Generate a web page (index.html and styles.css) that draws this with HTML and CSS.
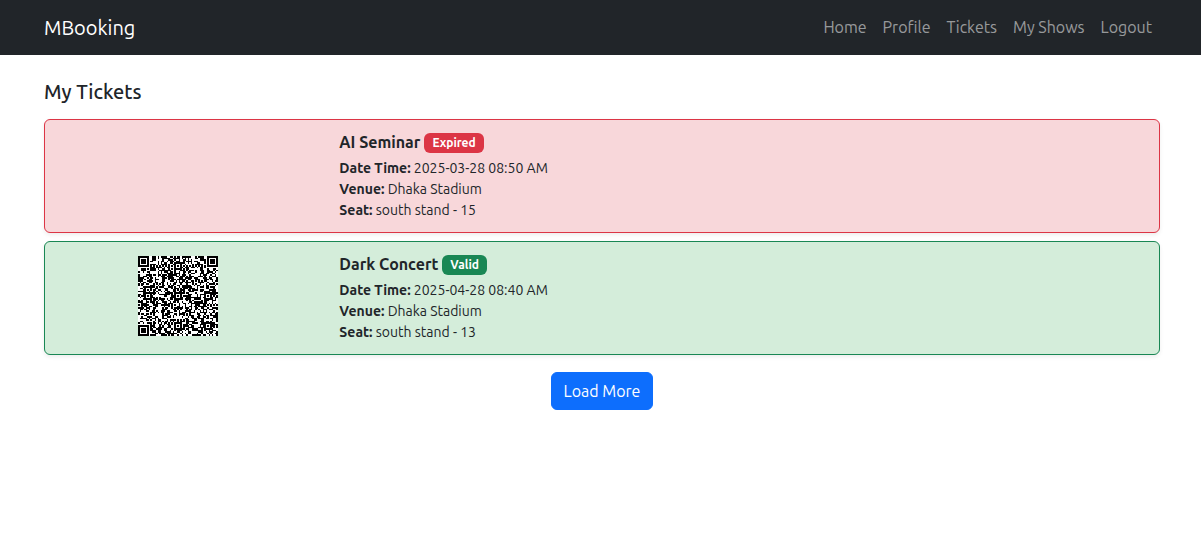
FILE: index.html
```html
<!DOCTYPE html>
<html lang="en">
<head>
<meta charset="utf-8">
<meta name="viewport" content="width=device-width, initial-scale=1">
<title>MBooking - My Tickets</title>
<link rel="stylesheet" href="styles.css">
</head>
<body>
<header class="navbar">
  <div class="container navbar-inner">
    <a class="brand" href="#">MBooking</a>
    <nav class="nav">
      <a class="nav-link" href="#">Home</a>
      <a class="nav-link" href="#">Profile</a>
      <a class="nav-link" href="#">Tickets</a>
      <a class="nav-link" href="#">My Shows</a>
      <a class="nav-link" href="#">Logout</a>
    </nav>
  </div>
</header>
<main class="container">
  <h1 class="page-title">My Tickets</h1>
  <div class="tickets">
    <article class="ticket ticket-expired">
      <div class="ticket-code"></div>
      <div class="ticket-info">
        <h2 class="ticket-title">AI Seminar <span class="badge badge-expired">Expired</span></h2>
        <p class="ticket-line"><strong>Date Time:</strong> 2025-03-28 08:50 AM</p>
        <p class="ticket-line"><strong>Venue:</strong> Dhaka Stadium</p>
        <p class="ticket-line"><strong>Seat:</strong> south stand - 15</p>
      </div>
    </article>
    <article class="ticket ticket-valid">
      <div class="ticket-code">
        <svg class="qr" viewBox="0 0 53 53" role="img" aria-label="Ticket QR code" shape-rendering="crispEdges"><rect width="53" height="53" fill="#fff"/><path id="qr-modules" fill="#000"/></svg>
      </div>
      <div class="ticket-info">
        <h2 class="ticket-title">Dark Concert <span class="badge badge-valid">Valid</span></h2>
        <p class="ticket-line"><strong>Date Time:</strong> 2025-04-28 08:40 AM</p>
        <p class="ticket-line"><strong>Venue:</strong> Dhaka Stadium</p>
        <p class="ticket-line"><strong>Seat:</strong> south stand - 13</p>
      </div>
    </article>
  </div>
  <div class="actions"><button class="button" type="button">Load More</button></div>
</main>
<script src="qr.js"></script>
</body>
</html>
```
FILE: styles.css
```css
*, *::before, *::after { box-sizing: border-box; }

body {
  margin: 0;
  background: #fff;
  color: #212529;
  font-family: Ubuntu, Roboto, "Noto Sans", sans-serif;
  font-size: 16px;
  font-weight: 400;
  line-height: 24px;
}

.container { padding: 0 41px 0 44px; }

.navbar {
  background: #212529;
  padding: 8px 0;
}
.navbar-inner {
  display: flex;
  align-items: center;
  justify-content: space-between;
}
.brand {
  color: #fff;
  font-size: 20px;
  line-height: 39px;
  text-decoration: none;
}
.nav {
  display: flex;
  gap: 16px;
  padding: 0 8px 2px 0;
}
.nav-link {
  color: rgba(255, 255, 255, .55);
  text-decoration: none;
}

.page-title {
  margin: 24px 0 14px;
  font-size: 20px;
  font-weight: 500;
  line-height: 26px;
}

.tickets {
  display: grid;
  gap: 8px;
}
.ticket {
  display: grid;
  grid-template-columns: 24% 1fr;
  border: 1px solid;
  border-radius: 6px;
  box-shadow: 0 2px 4px rgba(0, 0, 0, .075);
}
.ticket-expired {
  background: #f8d7da;
  border-color: #dc3545;
}
.ticket-valid {
  background: #d4edda;
  border-color: #198754;
}
.ticket-code {
  display: flex;
  justify-content: center;
  align-items: flex-start;
  padding: 14px 2px 0 0;
}
.qr {
  width: 80px;
  height: 80px;
}
.ticket-info { padding: 11px 12px 11px 27px; }
.ticket-title {
  display: flex;
  align-items: center;
  gap: 4px;
  margin: 0 0 5px;
  font-size: 16px;
  font-weight: 700;
  line-height: 20px;
}
.badge {
  margin-top: 2px;
  padding: 4px 8px;
  border-radius: 6px;
  color: #fff;
  font-size: 12px;
  font-weight: 700;
  line-height: 12px;
}
.badge-expired { background: #dc3545; }
.badge-valid { background: #198754; }
.ticket-line {
  margin: 0;
  font-size: 14px;
  line-height: 21px;
}
.ticket-line strong { font-weight: 700; }

.actions {
  display: flex;
  justify-content: center;
  margin-top: 17px;
}
.button {
  padding: 6px 12px;
  border: 1px solid #0d6efd;
  border-radius: 6px;
  background: #0d6efd;
  color: #fff;
  font: inherit;
}
```
FILE: qr.js
```js
// Draws a 53 x 53 module code: finder, alignment and timing patterns over data modules.
const size = 53;
let seed = 20250428;
function nextBit() {
  seed = (Math.imul(seed, 1664525) + 1013904223) >>> 0;
  return (seed >>> 8) / 16777216 < 0.53 ? 1 : 0;
}

const grid = Array.from({ length: size }, () => Array.from({ length: size }, nextBit));

function square(cx, cy, radius, isDark) {
  for (let y = cy - radius; y <= cy + radius; y++) {
    for (let x = cx - radius; x <= cx + radius; x++) {
      if (x < 0 || y < 0 || x >= size || y >= size) continue;
      grid[y][x] = isDark(Math.max(Math.abs(x - cx), Math.abs(y - cy))) ? 1 : 0;
    }
  }
}

for (let i = 0; i < size; i++) {
  grid[6][i] = grid[i][6] = i % 2 ? 0 : 1;
}
for (const [x, y] of [[26, 6], [6, 26], [26, 26], [46, 26], [26, 46], [46, 46]]) {
  square(x, y, 2, d => d !== 1);
}
for (const [x, y] of [[3, 3], [49, 3], [3, 49]]) {
  square(x, y, 4, d => d < 2 || d === 3);
}

let path = "";
grid.forEach((row, y) => row.forEach((dark, x) => {
  if (dark) path += `M${x} ${y}h1v1h-1z`;
}));
document.getElementById("qr-modules").setAttribute("d", path);
```
